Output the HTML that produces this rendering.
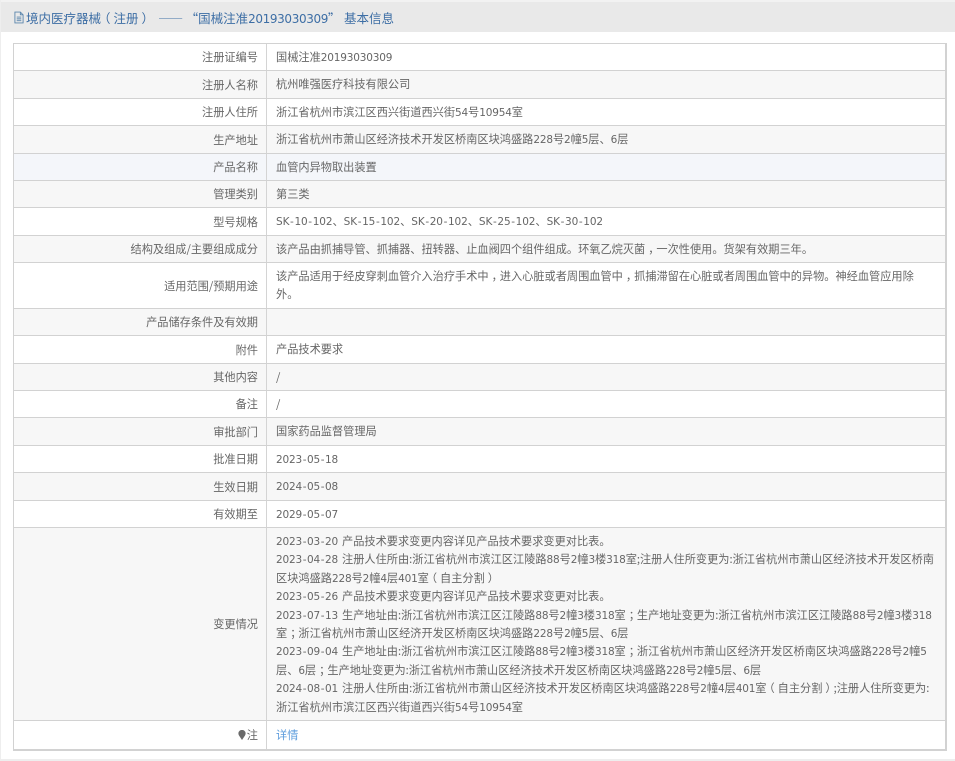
<!DOCTYPE html>
<html lang="zh"><head><meta charset="utf-8"><style>
html,body{margin:0;padding:0;background:#fff}
body{width:955px;height:761px;position:relative;overflow:hidden;font:11.2px/1 "Noto Sans CJK SC","Liberation Sans",sans-serif;color:#666}
i{font:normal 10.5px "DejaVu Sans",sans-serif;letter-spacing:-.18px}
i.d{margin-right:1.5px}
i.k{letter-spacing:-.1px}
s{text-decoration:none;margin:0 .7px}
em{font-style:normal;position:relative;left:3px}
em.o{left:-3px}
.top{position:absolute;left:0;top:0;width:955px;height:2px;background:#f2f2f2}
.lft{position:absolute;left:0;top:0;width:1px;height:761px;background:#eee}
.bot{position:absolute;left:0;top:759px;width:955px;height:2px;background:#eee}
.hd{position:absolute;left:1px;top:2px;width:954px;height:30px;background:#e9e9e9;color:#3d6ea5;font-size:12.5px;line-height:32px;white-space:nowrap}
.hd svg{position:absolute;left:13px;top:9px}
.hd span{position:absolute;left:25px;top:0}
.hd i{font-size:12px;letter-spacing:-.37px}
.r{position:absolute;left:13px;border:1px solid #d2d2d2;border-bottom:0;border-right-width:2px;box-sizing:content-box;width:931px}
.g{background:#f7f7f7}.b{background:#f4f6fa}
.l{position:absolute;left:0;width:252px;top:0;bottom:0;text-align:right;border-right:1px solid #d4d4d4;white-space:nowrap}
.l span{position:absolute;right:8px;top:50%;margin-top:-7px;line-height:14px}
.v{position:absolute;left:262px;top:0;white-space:nowrap;line-height:26px}
</style></head><body>
<div class="top"></div><div class="lft"></div><div class="bot"></div>
<div class="hd"><svg width="10" height="13" viewBox="0 0 11 13" fill="none" stroke="#5b86ad" stroke-width="1"><path d="M1 .5h6l3 3v9H1zM7 .5v3h3M3 6h5M3 8h5M3 10h5"/></svg><span>境内医疗器械<em class="o">（</em>注册<em>）</em><b style="font-weight:400;margin-left:7px">——</b><b style="font-weight:400;margin-left:2.5px">“</b>国械注准<i>20193030309</i><b style="font-weight:400;margin-right:3.5px">”</b>基本信息</span></div>

<div class="r" style="top:43px;height:26px"><div class="l"><span>注册证编号</span></div><div class="v">国械注准<i>20193030309</i></div></div>
<div class="r g" style="top:70px;height:27px"><div class="l"><span>注册人名称</span></div><div class="v">杭州唯强医疗科技有限公司</div></div>
<div class="r" style="top:98px;height:26px"><div class="l"><span>注册人住所</span></div><div class="v">浙江省杭州市滨江区西兴街道西兴街<i>54</i>号<i>10954</i>室</div></div>
<div class="r g" style="top:125px;height:27px"><div class="l"><span>生产地址</span></div><div class="v">浙江省杭州市萧山区经济技术开发区桥南区块鸿盛路<i>228</i>号<i>2</i>幢<i>5</i>层、<i>6</i>层</div></div>
<div class="r b" style="top:153px;height:26px"><div class="l"><span>产品名称</span></div><div class="v">血管内异物取出装置</div></div>
<div class="r g" style="top:180px;height:26px"><div class="l"><span>管理类别</span></div><div class="v">第三类</div></div>
<div class="r" style="top:207px;height:27px"><div class="l"><span>型号规格</span></div><div class="v"><i class="k">SK<s>-</s>10<s>-</s>102</i>、<i class="k">SK<s>-</s>15<s>-</s>102</i>、<i class="k">SK<s>-</s>20<s>-</s>102</i>、<i class="k">SK<s>-</s>25<s>-</s>102</i>、<i class="k">SK<s>-</s>30<s>-</s>102</i></div></div>
<div class="r g" style="top:235px;height:26px"><div class="l"><span>结构及组成/主要组成成分</span></div><div class="v">该产品由抓捕导管、抓捕器、扭转器、止血阀四个组件组成。环氧乙烷灭菌<em>，</em>一次性使用。货架有效期三年。</div></div>
<div class="r" style="top:262px;height:45px"><div class="l"><span>适用范围/预期用途</span></div><div class="v" style="line-height:18.4px;top:4px">该产品适用于经皮穿刺血管介入治疗手术中<em>，</em>进入心脏或者周围血管中<em>，</em>抓捕滞留在心脏或者周围血管中的异物。神经血管应用除<br>外。</div></div>
<div class="r g" style="top:308px;height:26px"><div class="l"><span>产品储存条件及有效期</span></div></div>
<div class="r" style="top:335px;height:27px"><div class="l"><span>附件</span></div><div class="v">产品技术要求</div></div>
<div class="r g" style="top:363px;height:26px"><div class="l"><span>其他内容</span></div><div class="v">/</div></div>
<div class="r" style="top:390px;height:26px"><div class="l"><span>备注</span></div><div class="v">/</div></div>
<div class="r g" style="top:417px;height:27px"><div class="l"><span>审批部门</span></div><div class="v">国家药品监督管理局</div></div>
<div class="r" style="top:445px;height:26px"><div class="l"><span>批准日期</span></div><div class="v"><i>2023<s>-</s>05<s>-</s>18</i></div></div>
<div class="r g" style="top:472px;height:27px"><div class="l"><span>生效日期</span></div><div class="v"><i>2024<s>-</s>05<s>-</s>08</i></div></div>
<div class="r" style="top:500px;height:26px"><div class="l"><span>有效期至</span></div><div class="v"><i>2029<s>-</s>05<s>-</s>07</i></div></div>
<div class="r g" style="top:527px;height:192px"><div class="l"><span>变更情况</span></div><div class="v" style="line-height:18.4px;top:4px"><i class="d">2023<s>-</s>03<s>-</s>20</i> 产品技术要求变更内容详见产品技术要求变更对比表。<br><i class="d">2023<s>-</s>04<s>-</s>28</i> 注册人住所由:浙江省杭州市滨江区江陵路<i>88</i>号<i>2</i>幢<i>3</i>楼<i>318</i>室;注册人住所变更为:浙江省杭州市萧山区经济技术开发区桥南<br>区块鸿盛路<i>228</i>号<i>2</i>幢<i>4</i>层<i>401</i>室<em class="o">（</em>自主分割<em>）</em><br><i class="d">2023<s>-</s>05<s>-</s>26</i> 产品技术要求变更内容详见产品技术要求变更对比表。<br><i class="d">2023<s>-</s>07<s>-</s>13</i> 生产地址由:浙江省杭州市滨江区江陵路<i>88</i>号<i>2</i>幢<i>3</i>楼<i>318</i>室<em>；</em>生产地址变更为:浙江省杭州市滨江区江陵路<i>88</i>号<i>2</i>幢<i>3</i>楼<i>318</i><br>室<em>；</em>浙江省杭州市萧山区经济开发区桥南区块鸿盛路<i>228</i>号<i>2</i>幢<i>5</i>层、<i>6</i>层<br><i class="d">2023<s>-</s>09<s>-</s>04</i> 生产地址由:浙江省杭州市滨江区江陵路<i>88</i>号<i>2</i>幢<i>3</i>楼<i>318</i>室<em>；</em>浙江省杭州市萧山区经济开发区桥南区块鸿盛路<i>228</i>号<i>2</i>幢<i>5</i><br>层、<i>6</i>层<em>；</em>生产地址变更为:浙江省杭州市萧山区经济技术开发区桥南区块鸿盛路<i>228</i>号<i>2</i>幢<i>5</i>层、<i>6</i>层<br><i class="d">2024<s>-</s>08<s>-</s>01</i> 注册人住所由:浙江省杭州市萧山区经济技术开发区桥南区块鸿盛路<i>228</i>号<i>2</i>幢<i>4</i>层<i>401</i>室<em class="o">（</em>自主分割<em>）</em>;注册人住所变更为:<br>浙江省杭州市滨江区西兴街道西兴街<i>54</i>号<i>10954</i>室</div></div>
<div class="r" style="top:720px;height:28px;border-bottom:2px solid #d2d2d2"><div class="l"><span><svg width="8" height="10" viewBox="0 0 8 10" style="vertical-align:-1px;margin-right:1px"><path d="M4 10 1 5.5A3.6 3.6 0 1 1 7 5.5Z" fill="#6a6a6a"/></svg>注</span></div><div class="v" style="line-height:28px;color:#5b9bdc;font-size:11.2px">详情</div></div>
</body></html>
